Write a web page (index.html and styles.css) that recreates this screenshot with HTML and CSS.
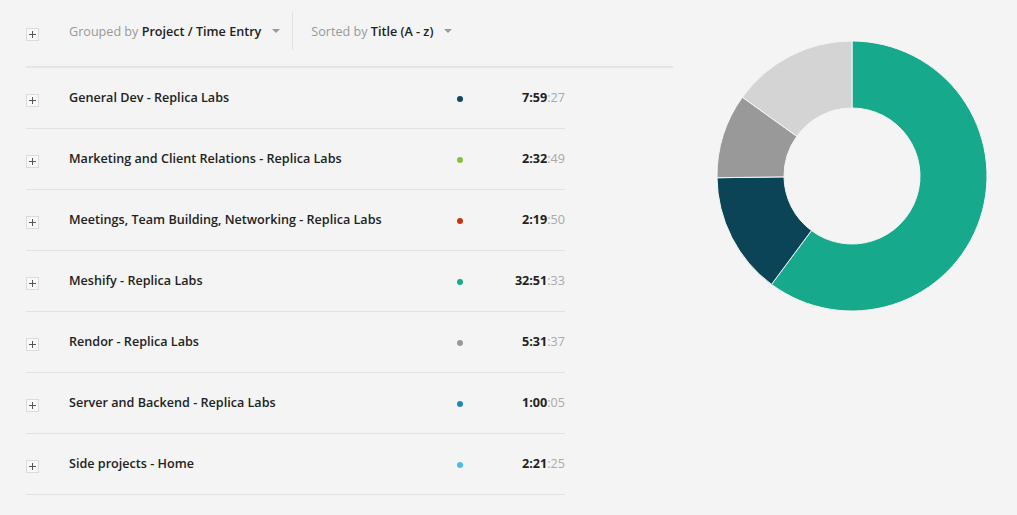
FILE: index.html
```html
<!DOCTYPE html>
<html>
<head>
<meta charset="utf-8">
<link rel="stylesheet" href="styles.css">
</head>
<body>
<div class="page">
  <div class="left">
    <div class="header">
      <div class="toggle-cell"><span class="plus"></span></div>
      <div class="dropdown">
        <span class="muted">Grouped by</span>&nbsp;<strong>Project / Time Entry</strong>
        <span class="caret"></span>
      </div>
      <div class="sep"></div>
      <div class="dropdown">
        <span class="muted">Sorted by</span>&nbsp;<strong>Title (A - z)</strong>
        <span class="caret"></span>
      </div>
    </div>
    <div class="rows">
      <div class="row">
        <div class="toggle-cell"><span class="plus"></span></div>
        <div class="title">General Dev - Replica Labs</div>
        <span class="dot c-navy"></span>
        <div class="time"><b>7:59</b><span>:27</span></div>
      </div>
      <div class="row">
        <div class="toggle-cell"><span class="plus"></span></div>
        <div class="title">Marketing and Client Relations - Replica Labs</div>
        <span class="dot c-green"></span>
        <div class="time"><b>2:32</b><span>:49</span></div>
      </div>
      <div class="row">
        <div class="toggle-cell"><span class="plus"></span></div>
        <div class="title">Meetings, Team Building, Networking - Replica Labs</div>
        <span class="dot c-red"></span>
        <div class="time"><b>2:19</b><span>:50</span></div>
      </div>
      <div class="row">
        <div class="toggle-cell"><span class="plus"></span></div>
        <div class="title">Meshify - Replica Labs</div>
        <span class="dot c-teal"></span>
        <div class="time"><b>32:51</b><span>:33</span></div>
      </div>
      <div class="row">
        <div class="toggle-cell"><span class="plus"></span></div>
        <div class="title">Rendor - Replica Labs</div>
        <span class="dot c-gray"></span>
        <div class="time"><b>5:31</b><span>:37</span></div>
      </div>
      <div class="row">
        <div class="toggle-cell"><span class="plus"></span></div>
        <div class="title">Server and Backend - Replica Labs</div>
        <span class="dot c-blue"></span>
        <div class="time"><b>1:00</b><span>:05</span></div>
      </div>
      <div class="row">
        <div class="toggle-cell"><span class="plus"></span></div>
        <div class="title">Side projects - Home</div>
        <span class="dot c-sky"></span>
        <div class="time"><b>2:21</b><span>:25</span></div>
      </div>
    </div>
  </div>
  <div class="chart">
    <svg width="270" height="270" viewBox="0 0 270 270">
      <path class="seg teal" d="M135,0 A135,135 0 1 1 54.51,243.38 L94.46,189.59 A68,68 0 1 0 135,67 Z"/>
      <path class="seg navy" d="M54.51,243.38 A135,135 0 0 1 0.01,136.72 L67.01,135.87 A68,68 0 0 0 94.46,189.59 Z"/>
      <path class="seg gray" d="M0.01,136.72 A135,135 0 0 1 25.37,56.23 L79.78,95.32 A68,68 0 0 0 67.01,135.87 Z"/>
      <path class="seg light" d="M25.37,56.23 A135,135 0 0 1 135,0 L135,67 A68,68 0 0 0 79.78,95.32 Z"/>
    </svg>
  </div>
</div>
</body>
</html>
```

FILE: styles.css
```css
html, body {
  margin: 0;
  padding: 0;
  background: #f4f4f4;
  font-family: "Open Sans", "Liberation Sans", sans-serif;
  font-size: 12.6px;
  color: #222;
}

.page {
  display: flex;
  align-items: flex-start;
  padding-left: 26px;
}

.left {
  width: 647px;
}

.header {
  display: flex;
  align-items: center;
  box-sizing: border-box;
  height: 68px;
  padding-bottom: 4px;
  border-bottom: 2px solid #e5e5e5;
}

.toggle-cell {
  width: 43px;
  display: flex;
  align-items: center;
}

.header .toggle-cell {
  padding-top: 6px;
}

.plus {
  position: relative;
  display: block;
  width: 11px;
  height: 11px;
  border: 1px solid #dcdcdc;
  background: #f9f9f9;
}

.plus::before,
.plus::after {
  content: "";
  position: absolute;
  background: #555;
}

.plus::before {
  left: 2px;
  top: 5px;
  width: 7px;
  height: 1px;
}

.plus::after {
  left: 5px;
  top: 2px;
  width: 1px;
  height: 7px;
}

.dropdown {
  display: flex;
  align-items: center;
  white-space: nowrap;
}

.dropdown strong {
  font-weight: 600;
  color: #222;
}

.muted {
  color: #999;
}

.caret {
  width: 0;
  height: 0;
  margin-left: 11px;
  border-left: 4px solid transparent;
  border-right: 4px solid transparent;
  border-top: 4px solid #9a9a9a;
}

.sep {
  width: 1px;
  height: 38px;
  background: #e2e2e2;
  margin: 0 18px 0 12px;
}

.rows {
  width: 539px;
}

.row {
  display: grid;
  grid-template-columns: 43px 1fr 6px 102px;
  align-items: center;
  box-sizing: border-box;
  height: 61px;
  padding-bottom: 2px;
  border-bottom: 1px solid #e2e2e2;
}

.row .toggle-cell {
  padding-top: 7px;
}

.title {
  font-weight: 600;
  color: #222;
  white-space: nowrap;
}

.dot {
  display: block;
  width: 6px;
  height: 6px;
  border-radius: 50%;
  margin-top: 4px;
}

.c-navy { background: #0b4a62; }
.c-green { background: #8cbf3a; }
.c-red { background: #c8340f; }
.c-teal { background: #17a98c; }
.c-gray { background: #999999; }
.c-blue { background: #1f88c0; }
.c-sky { background: #4cb9f5; }

.time {
  text-align: right;
  white-space: nowrap;
}

.time b {
  font-weight: 700;
  color: #222;
}

.time span {
  color: #aaa;
}

.chart {
  margin-left: 44px;
  margin-top: 41px;
}

.chart svg {
  display: block;
  overflow: visible;
}

.seg {
  stroke: #f4f4f4;
  stroke-width: 1;
  stroke-linejoin: round;
}

.teal { fill: #16a98c; }
.navy { fill: #0a4456; }
.gray { fill: #999999; }
.light { fill: #d4d4d4; }
```
